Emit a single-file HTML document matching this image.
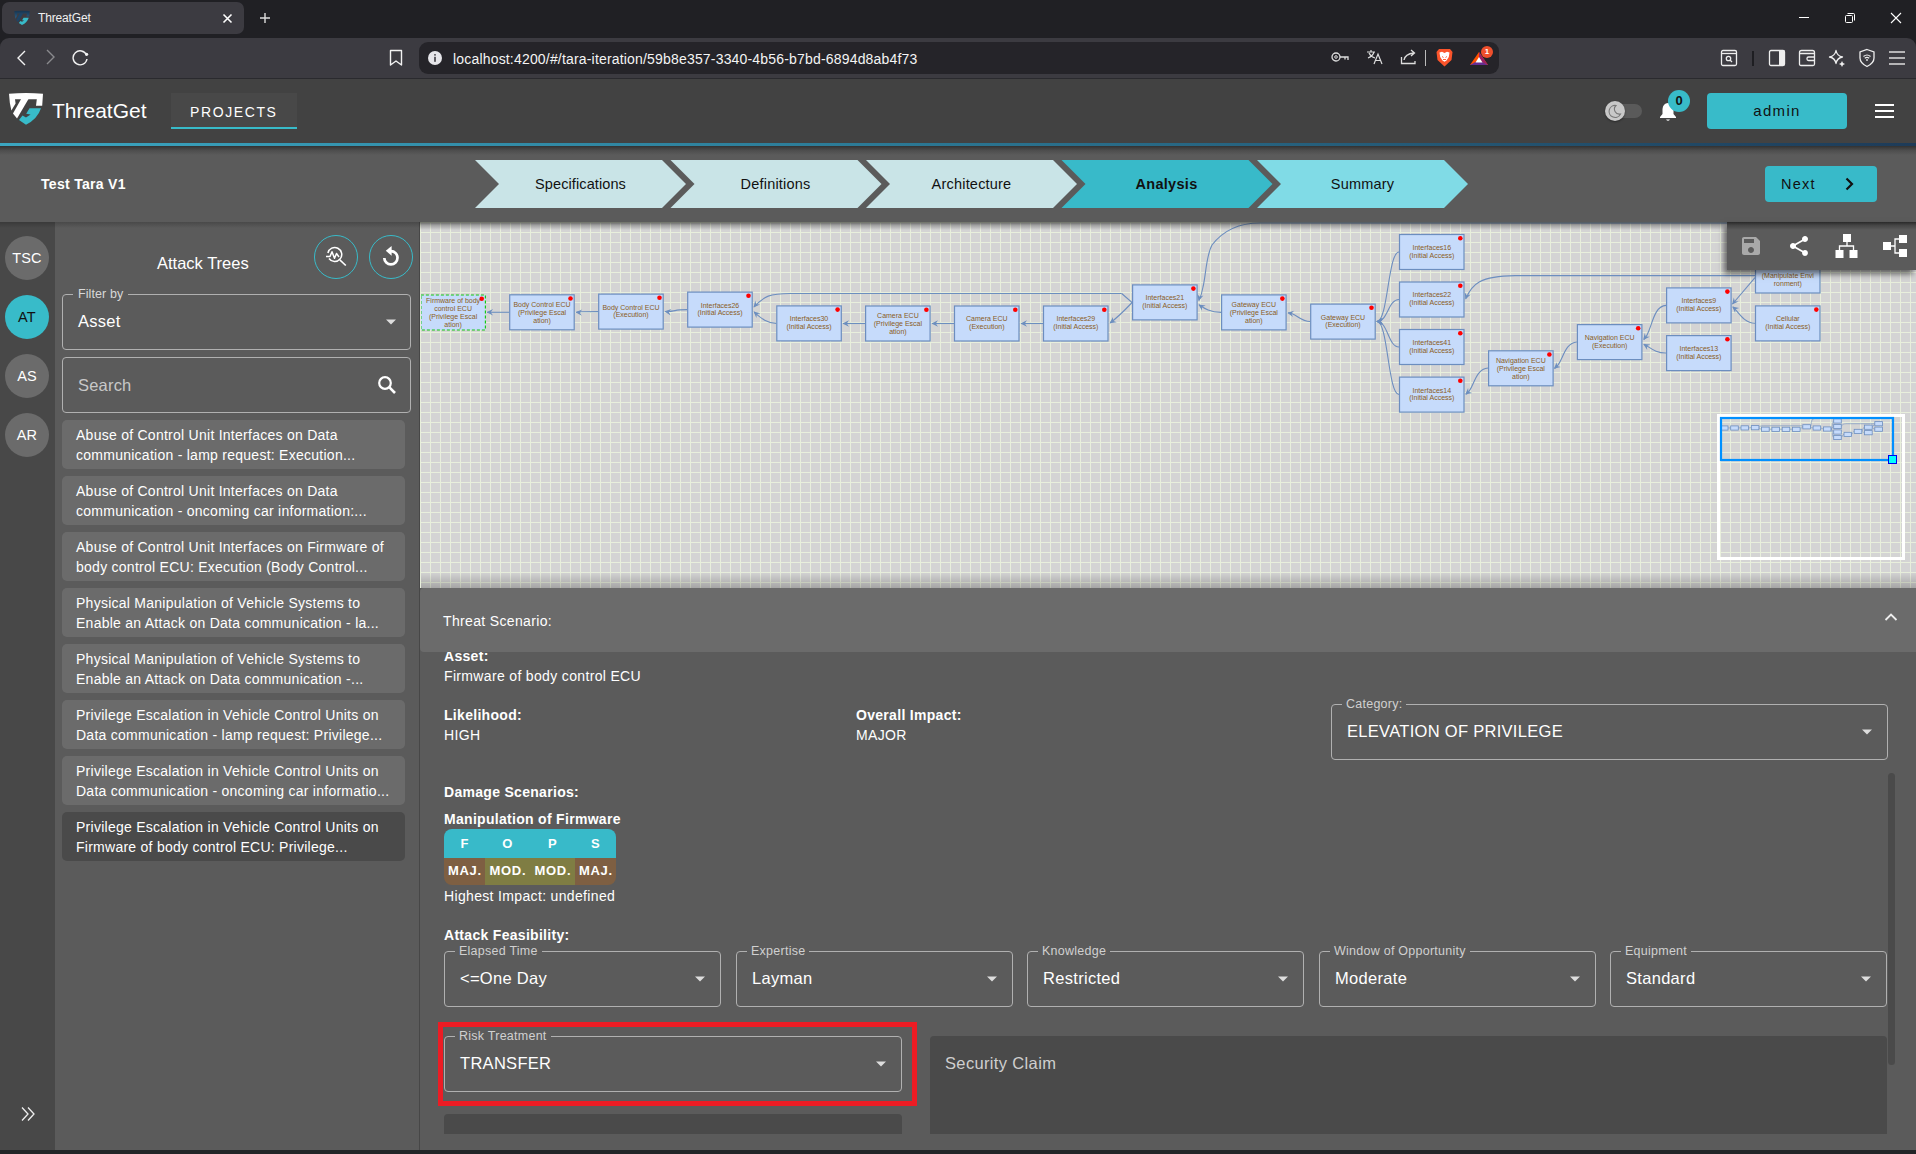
<!DOCTYPE html>
<html><head><meta charset="utf-8">
<style>
*{box-sizing:border-box;margin:0;padding:0}
html,body{width:1916px;height:1154px;overflow:hidden;background:#5b5b5b;font-family:"Liberation Sans",sans-serif;color:#fff}
.a{position:absolute}
/* browser chrome */
#tabstrip{left:0;top:0;width:1916px;height:50px;background:#202024}
#tab{left:2px;top:2px;width:242px;height:32px;background:#3c3b41;border-radius:7px}
#toolbar{left:0;top:38px;width:1916px;height:41px;background:#3c3b41;border-radius:9px 9px 0 0;border-bottom:1px solid #2a2a2e}
#url{left:419px;top:42px;width:1080px;height:32px;background:#252429;border-radius:9px}
/* app header */
#apphdr{left:0;top:79px;width:1916px;height:64px;background:#424242}
#hdrline{left:0;top:143px;width:1916px;height:3px;background:linear-gradient(to right,#3ba6c1 0%,#2c7a96 45%,#1e3b58 100%)}
#subhdr{left:0;top:146px;width:1916px;height:76px;background:#5b5b5b}
#rail{left:0;top:222px;width:55px;height:928px;background:#484848}
#side{left:55px;top:222px;width:365px;height:928px;background:#5b5b5b;border-right:1px solid #474747}
#diagram{left:420px;top:222px;width:1496px;height:366px;background-color:#d4d4d4;
 background-image:linear-gradient(to right,#e8efdc 1px,transparent 1px),linear-gradient(to bottom,#e8efdc 1px,transparent 1px);
 background-size:10px 10px;background-position:0px 10px;overflow:hidden}
#panel{left:420px;top:588px;width:1496px;height:562px;background:#5b5b5b}
#bottomstrip{left:0;top:1150px;width:1916px;height:4px;background:#222527}
.circ{left:5px;width:44px;height:44px;border-radius:22px;background:#6b6b6b;color:#fff;font-size:14.5px;text-align:center;line-height:44px;letter-spacing:0.2px}
.fld{border:1px solid #b0b0b0;border-radius:4px}
.item{left:62px;width:343px;height:49px;border-radius:5px;padding:5px 0 0 14px;font-size:14px;line-height:20px;color:#fff;letter-spacing:0.26px;white-space:nowrap}
.b14{font-size:14px;font-weight:bold;color:#fff;letter-spacing:0.3px;white-space:nowrap}
.r14{font-size:14px;color:#fff;letter-spacing:0.34px;white-space:nowrap}
.fld2{border:1px solid #b0b0b0;border-radius:4px}
.lab{padding:0 4px;background:#5b5b5b;font-size:12.5px;color:#d0d0d0;letter-spacing:0.25px;line-height:15px;white-space:nowrap}
.val{color:#fff;letter-spacing:0.3px;white-space:nowrap}
.fops{text-align:center;font-size:13px;font-weight:bold;color:#fff;letter-spacing:0.2px}
</style></head><body>
<div id="tabstrip" class="a"></div>
<div id="tab" class="a"></div>
<div id="toolbar" class="a"></div>
<div id="url" class="a"></div>

<!-- tab content -->
<svg class="a" style="left:13px;top:9px" width="18" height="18" viewBox="0 0 40 38">
 <defs><linearGradient id="fg" x1="0" y1="0" x2="0" y2="1"><stop offset="0" stop-color="#173550"/><stop offset="1" stop-color="#2b5f86"/></linearGradient></defs>
 <path d="M3 3.7Q20 2.4 37 3.7L36.2 15.7L30 15.7L30.8 9.2L9 9.2L9.6 13.4L5.4 20.4Q3.4 13 3 3.7Z" fill="url(#fg)"/>
 <path d="M15.4 8.5L22.8 8.5L11 28.5L7 23.5Z" fill="#1d4466"/>
 <path d="M23.5 18.3L35 18.3Q31.5 29 20 34.8L13 30L16.5 25.5L20 27.6L24.6 24.4L20.2 23.8Z" fill="#38bbc9"/>
</svg>
<div class="a" style="left:38px;top:11px;font-size:12px;color:#f0f0f0;letter-spacing:-0.15px">ThreatGet</div>
<svg class="a" style="left:222px;top:13px" width="11" height="11" viewBox="0 0 11 11"><path d="M1.5 1.5L9.5 9.5M9.5 1.5L1.5 9.5" stroke="#fff" stroke-width="1.6"/></svg>
<svg class="a" style="left:259px;top:12px" width="12" height="12" viewBox="0 0 12 12"><path d="M6 1V11M1 6H11" stroke="#ddd" stroke-width="1.4"/></svg>
<!-- window controls -->
<svg class="a" style="left:1797px;top:11px" width="14" height="14" viewBox="0 0 14 14"><path d="M2 6.5H12" stroke="#fff" stroke-width="1"/></svg>
<svg class="a" style="left:1843px;top:11px" width="14" height="14" viewBox="0 0 14 14"><rect x="2.5" y="4.5" width="7" height="7" rx="1" fill="none" stroke="#fff" stroke-width="1"/><path d="M4.5 2.5H10.5Q11.5 2.5 11.5 3.5V9.5" fill="none" stroke="#fff" stroke-width="1"/></svg>
<svg class="a" style="left:1889px;top:11px" width="14" height="14" viewBox="0 0 14 14"><path d="M2 2L12 12M12 2L2 12" stroke="#fff" stroke-width="1.1"/></svg>
<!-- nav -->
<svg class="a" style="left:12.5px;top:48.5px" width="18" height="18" viewBox="0 0 18 18"><path d="M12 2L5 9L12 16" fill="none" stroke="#f2f2f2" stroke-width="1.4"/></svg>
<svg class="a" style="left:41px;top:48px" width="18" height="18" viewBox="0 0 18 18"><path d="M6 2L13 9L6 16" fill="none" stroke="#8a8a8e" stroke-width="1.4"/></svg>
<svg class="a" style="left:71px;top:48px" width="20" height="18" viewBox="0 0 20 18"><path d="M15.5 7 A7 7 0 1 0 16 11" fill="none" stroke="#f2f2f2" stroke-width="1.4"/><circle cx="15.6" cy="6.3" r="1.6" fill="#f2f2f2"/></svg>
<svg class="a" style="left:388px;top:49px" width="16" height="18" viewBox="0 0 16 18"><path d="M2.5 1.5H13.5V16L8 12L2.5 16Z" fill="none" stroke="#f2f2f2" stroke-width="1.4" stroke-linejoin="round"/></svg>
<svg class="a" style="left:428px;top:51px" width="14" height="14" viewBox="0 0 14 14"><circle cx="7" cy="7" r="7" fill="#e6e6ea"/><rect x="6.2" y="5.8" width="1.6" height="5" fill="#3c3b41"/><circle cx="7" cy="3.8" r="0.9" fill="#3c3b41"/></svg>
<div class="a" style="left:453px;top:51px;font-size:14px;color:#f4f4f4;letter-spacing:0.18px;white-space:nowrap">localhost:4200/#/tara-iteration/59b8e357-3340-4b56-b7bd-6894d8ab4f73</div>
<!-- url right icons -->
<svg class="a" style="left:1331px;top:50px" width="20" height="14" viewBox="0 0 20 14"><circle cx="5" cy="7" r="4" fill="none" stroke="#ddd" stroke-width="1.3"/><circle cx="5" cy="7" r="1.3" fill="none" stroke="#ddd" stroke-width="1"/><path d="M9 7H17V10M14 7V9.5" fill="none" stroke="#ddd" stroke-width="1.3"/></svg>
<svg class="a" style="left:1366px;top:49px" width="18" height="16" viewBox="0 0 18 16"><path d="M1 3H9M5 1V3M2 9Q7 7 8 3M3 4Q5 8 9 9" fill="none" stroke="#ddd" stroke-width="1.2"/><path d="M8 15L12 5L16 15M9.5 11.5H14.5" fill="none" stroke="#ddd" stroke-width="1.2"/></svg>
<svg class="a" style="left:1400px;top:49px" width="18" height="16" viewBox="0 0 18 16"><path d="M1.5 8V14.5H15V12" fill="none" stroke="#ddd" stroke-width="1.3"/><path d="M4 11Q5 5 14 4M11 1L14.5 4L11 7" fill="none" stroke="#ddd" stroke-width="1.3"/></svg>
<div class="a" style="left:1425px;top:50px;width:1px;height:16px;background:#bbb"></div>
<svg class="a" style="left:1436px;top:48px" width="17" height="19" viewBox="0 0 17 19"><path d="M3 1H14L16.5 4L15.5 12L8.5 18.5L1.5 12L0.5 4Z" fill="#fb542b"/><path d="M3.5 4.5L6 3.8L8.5 5L11 3.8L13.5 4.5L12.8 9L10.5 12.5L8.5 13.8L6.5 12.5L4.2 9Z" fill="#fff"/><path d="M6 8.5L7.5 9.5M11 8.5L9.5 9.5M7 11.5H10" stroke="#fb542b" stroke-width="0.9"/></svg>
<svg class="a" style="left:1469px;top:48px" width="22" height="20" viewBox="0 0 22 20"><path d="M10 4L19 17H1Z" fill="#ff5000"/><path d="M10 4L19 17L10 12Z" fill="#9e1f63"/><path d="M1 17H19L10 12Z" fill="#662d91"/><path d="M10 9L13.5 14.5H6.5Z" fill="#fff"/></svg>
<div class="a" style="left:1481px;top:46px;width:12px;height:12px;border-radius:6px;background:#ef4f2c;color:#fff;font-size:8px;text-align:center;line-height:12px;font-weight:bold">1</div>
<!-- right toolbar icons -->
<svg class="a" style="left:1720px;top:49px" width="18" height="18" viewBox="0 0 18 18"><rect x="1.5" y="1.5" width="15" height="15" rx="1.5" fill="none" stroke="#eee" stroke-width="1.3"/><path d="M1.5 4.5H16.5" stroke="#eee" stroke-width="1.3"/><circle cx="8.5" cy="9.5" r="2.2" fill="none" stroke="#eee" stroke-width="1.3"/><path d="M10 11L12 13" stroke="#eee" stroke-width="1.3"/></svg>
<div class="a" style="left:1752px;top:51px;width:2px;height:15px;background:#1e1e22"></div>
<svg class="a" style="left:1768px;top:49px" width="18" height="18" viewBox="0 0 18 18"><rect x="1.5" y="1.5" width="15" height="15" rx="1.5" fill="none" stroke="#eee" stroke-width="1.3"/><rect x="11" y="1.5" width="5.5" height="15" fill="#eee"/></svg>
<svg class="a" style="left:1798px;top:49px" width="18" height="18" viewBox="0 0 18 18"><path d="M1.5 3.5Q1.5 1.5 3.5 1.5H14.5Q16.5 1.5 16.5 3.5V15Q16.5 16.5 15 16.5H3Q1.5 16.5 1.5 15Z" fill="none" stroke="#eee" stroke-width="1.3"/><path d="M1.5 4.5H16.5M16.5 8H10.5Q9 8 9 9.5V10Q9 11.5 10.5 11.5H16.5" fill="none" stroke="#eee" stroke-width="1.3"/></svg>
<svg class="a" style="left:1828px;top:49px" width="18" height="18" viewBox="0 0 18 18"><path d="M8 1.5Q9 7 14.5 8Q9 9 8 14.5Q7 9 1.5 8Q7 7 8 1.5Z" fill="none" stroke="#eee" stroke-width="1.3" stroke-linejoin="round"/><path d="M14 12L15 14L17 15L15 16L14 18L13 16L11 15L13 14Z" fill="#eee"/></svg>
<svg class="a" style="left:1858px;top:48px" width="18" height="20" viewBox="0 0 18 20"><path d="M9 1.5L16 4V10Q16 15 9 18.5Q2 15 2 10V4Z" fill="none" stroke="#eee" stroke-width="1.3"/><path d="M5.5 8.5Q9 5.5 12.5 8.5M6.8 10.3Q9 8.5 11.2 10.3" fill="none" stroke="#eee" stroke-width="1.2"/><circle cx="9" cy="12" r="0.9" fill="#eee"/></svg>
<svg class="a" style="left:1888px;top:49px" width="18" height="18" viewBox="0 0 18 18"><path d="M1 3H17M1 9H17M1 15H17" stroke="#ddd" stroke-width="1.5"/></svg>
<div id="apphdr" class="a"></div>
<div id="hdrline" class="a"></div>
<div id="subhdr" class="a"></div>
<div id="rail" class="a"></div>
<div id="side" class="a"></div>
<div id="diagram" class="a"></div>
<!--DIAGRAM-->
<svg class="a" style="left:421px;top:222px;z-index:1" width="1495" height="366" viewBox="421 222 1495 366">
<g fill="none" stroke="#6c8ebf" stroke-width="1.1">
<path d="M509.2 312.3 L487 312.3"/>
<path d="M598.2 311.6 C560 311.8 590 312 576 312.3"/>
<path d="M687.2 309.6 C670 309.8 680 311.3 665 311.5"/>
<path d="M1121.7 293.5 L790 293.5 C770 293.5 764 296 754 307"/>
<path d="M776.3 323.4 C766 323 761 318 754 312"/>
<path d="M865.1 323.5 L843 323.5"/>
<path d="M954 323.5 L932 323.5"/>
<path d="M1043 323.5 L1021 323.5"/>
<path d="M1121.7 293.5 L1132.1 302.5 C1125 310 1117 318 1110 323"/>
<path d="M1221.1 312.4 C1210 312.2 1205 309 1199 304.8"/>
<path d="M1260 223 C1236 223 1222 232 1212 245 C1206 256 1206 275 1203 287 C1202 293 1200.5 297 1199 300.5"/>
<path d="M1310.2 321.5 C1300 321.5 1296 313 1288 312.7"/>
<path d="M1399 252 C1388 252 1388 321.5 1377 321.5"/>
<path d="M1399 299.5 C1388 299.5 1388 321.5 1377 321.5"/>
<path d="M1399 347 C1388 347 1388 321.5 1377 321.5"/>
<path d="M1399 394.5 C1388 394.5 1388 321.5 1377 321.5"/>
<path d="M1755 275.6 L1515 275.6 C1480 276 1472 284 1466 298.5"/>
<path d="M1755 277.6 L1732.5 304"/>
<path d="M1755 323.2 C1744 323 1739 313 1733 306.8"/>
<path d="M1666.1 305.4 C1652 306 1652 332 1644 339.5"/>
<path d="M1666.1 353 C1655 353 1651 348 1644 344.2"/>
<path d="M1576.9 342 C1563 343 1563 364 1554.5 368.5"/>
<path d="M1488.1 368 C1474 369 1474 390 1466 394.3"/>
<path d="M1760 223 L1260 223"/>
</g><g fill="#6c8ebf">
<path d="M486.5 312.3L493.0 309.1L490.8 312.3L493.0 315.5Z"/>
<path d="M575.5 312.3L582.2 309.4L579.8 312.5L581.8 315.8Z"/>
<path d="M664.5 311.6L671.3 309.0L668.8 312.0L670.7 315.4Z"/>
<path d="M753.5 307.5L755.2 300.5L756.3 304.2L760.1 304.6Z"/>
<path d="M753.5 311.5L760.5 313.2L756.8 314.3L756.4 318.1Z"/>
<path d="M842.5 323.5L849.0 320.3L846.8 323.5L849.0 326.7Z"/>
<path d="M931.5 323.5L938.0 320.3L935.8 323.5L938.0 326.7Z"/>
<path d="M1020.5 323.5L1027.0 320.3L1024.8 323.5L1027.0 326.7Z"/>
<path d="M1109.5 323.3L1113.0 317.0L1113.0 320.8L1116.7 322.2Z"/>
<path d="M1198.5 304.5L1205.7 305.6L1202.0 307.0L1202.0 310.8Z"/>
<path d="M1198.6 301.0L1197.2 293.9L1199.7 296.8L1203.4 295.5Z"/>
<path d="M1287.2 312.7L1294.2 310.7L1291.4 313.4L1293.0 317.0Z"/>
<path d="M1376.2 321.5L1382.2 317.4L1380.5 320.9L1383.1 323.8Z"/>
<path d="M1376.2 321.5L1382.5 318.0L1380.5 321.3L1382.9 324.4Z"/>
<path d="M1376.2 321.5L1382.9 318.6L1380.5 321.7L1382.5 325.0Z"/>
<path d="M1376.2 321.5L1383.1 319.2L1380.5 322.1L1382.2 325.6Z"/>
<path d="M1465.3 299.4L1464.8 292.2L1466.9 295.4L1470.7 294.6Z"/>
<path d="M1732.0 304.4L1733.8 297.4L1734.8 301.2L1738.7 301.6Z"/>
<path d="M1732.2 306.4L1739.2 308.1L1735.5 309.2L1735.1 313.0Z"/>
<path d="M1643.2 340.0L1644.7 332.9L1645.8 336.6L1649.7 336.8Z"/>
<path d="M1643.2 344.0L1650.4 344.5L1646.9 346.1L1647.2 350.0Z"/>
<path d="M1553.8 368.8L1556.7 362.2L1557.1 366.0L1560.8 367.1Z"/>
<path d="M1465.2 394.6L1468.1 388.0L1468.5 391.8L1472.2 392.9Z"/>
</g>
<rect x="420.9" y="295.0" width="64.5" height="35" fill="#c6dbfb" stroke="#12c812" stroke-width="1.15" stroke-dasharray="3 2"/>
<circle cx="481.7" cy="298.7" r="2.3" fill="#f00"/>
<text x="453.1" y="303.0" text-anchor="middle" font-size="7" fill="#8a5c24">Firmware of body</text>
<text x="453.1" y="310.9" text-anchor="middle" font-size="7" fill="#8a5c24">control ECU</text>
<text x="453.1" y="318.8" text-anchor="middle" font-size="7" fill="#8a5c24">(Privilege Escal</text>
<text x="453.1" y="326.8" text-anchor="middle" font-size="7" fill="#8a5c24">ation)</text>
<rect x="509.7" y="294.8" width="64.5" height="35" fill="#c6dbfb" stroke="#6c8ebf" stroke-width="1.2"/>
<circle cx="570.5" cy="298.5" r="2.3" fill="#f00"/>
<text x="542.0" y="306.8" text-anchor="middle" font-size="7" fill="#8a5c24">Body Control ECU</text>
<text x="542.0" y="314.7" text-anchor="middle" font-size="7" fill="#8a5c24">(Privilege Escal</text>
<text x="542.0" y="322.6" text-anchor="middle" font-size="7" fill="#8a5c24">ation)</text>
<rect x="598.7" y="294.1" width="64.5" height="35" fill="#c6dbfb" stroke="#6c8ebf" stroke-width="1.2"/>
<circle cx="659.5" cy="297.8" r="2.3" fill="#f00"/>
<text x="631.0" y="309.5" text-anchor="middle" font-size="7" fill="#8a5c24">Body Control ECU</text>
<text x="631.0" y="317.4" text-anchor="middle" font-size="7" fill="#8a5c24">(Execution)</text>
<rect x="687.7" y="292.1" width="64.5" height="35" fill="#c6dbfb" stroke="#6c8ebf" stroke-width="1.2"/>
<circle cx="748.5" cy="295.8" r="2.3" fill="#f00"/>
<text x="720.0" y="307.5" text-anchor="middle" font-size="7" fill="#8a5c24">Interfaces26</text>
<text x="720.0" y="315.4" text-anchor="middle" font-size="7" fill="#8a5c24">(Initial Access)</text>
<rect x="776.8" y="305.9" width="64.5" height="35" fill="#c6dbfb" stroke="#6c8ebf" stroke-width="1.2"/>
<circle cx="837.6" cy="309.6" r="2.3" fill="#f00"/>
<text x="809.0" y="321.2" text-anchor="middle" font-size="7" fill="#8a5c24">Interfaces30</text>
<text x="809.0" y="329.1" text-anchor="middle" font-size="7" fill="#8a5c24">(Initial Access)</text>
<rect x="865.6" y="306.0" width="64.5" height="35" fill="#c6dbfb" stroke="#6c8ebf" stroke-width="1.2"/>
<circle cx="926.4" cy="309.7" r="2.3" fill="#f00"/>
<text x="897.9" y="318.0" text-anchor="middle" font-size="7" fill="#8a5c24">Camera ECU</text>
<text x="897.9" y="325.9" text-anchor="middle" font-size="7" fill="#8a5c24">(Privilege Escal</text>
<text x="897.9" y="333.8" text-anchor="middle" font-size="7" fill="#8a5c24">ation)</text>
<rect x="954.5" y="306.0" width="64.5" height="35" fill="#c6dbfb" stroke="#6c8ebf" stroke-width="1.2"/>
<circle cx="1015.3" cy="309.7" r="2.3" fill="#f00"/>
<text x="986.8" y="321.4" text-anchor="middle" font-size="7" fill="#8a5c24">Camera ECU</text>
<text x="986.8" y="329.2" text-anchor="middle" font-size="7" fill="#8a5c24">(Execution)</text>
<rect x="1043.5" y="306.0" width="64.5" height="35" fill="#c6dbfb" stroke="#6c8ebf" stroke-width="1.2"/>
<circle cx="1104.3" cy="309.7" r="2.3" fill="#f00"/>
<text x="1075.8" y="321.4" text-anchor="middle" font-size="7" fill="#8a5c24">Interfaces29</text>
<text x="1075.8" y="329.2" text-anchor="middle" font-size="7" fill="#8a5c24">(Initial Access)</text>
<rect x="1132.6" y="284.9" width="64.5" height="35" fill="#c6dbfb" stroke="#6c8ebf" stroke-width="1.2"/>
<circle cx="1193.4" cy="288.6" r="2.3" fill="#f00"/>
<text x="1164.8" y="300.2" text-anchor="middle" font-size="7" fill="#8a5c24">Interfaces21</text>
<text x="1164.8" y="308.1" text-anchor="middle" font-size="7" fill="#8a5c24">(Initial Access)</text>
<rect x="1221.6" y="294.9" width="64.5" height="35" fill="#c6dbfb" stroke="#6c8ebf" stroke-width="1.2"/>
<circle cx="1282.4" cy="298.6" r="2.3" fill="#f00"/>
<text x="1253.8" y="306.9" text-anchor="middle" font-size="7" fill="#8a5c24">Gateway ECU</text>
<text x="1253.8" y="314.8" text-anchor="middle" font-size="7" fill="#8a5c24">(Privilege Escal</text>
<text x="1253.8" y="322.7" text-anchor="middle" font-size="7" fill="#8a5c24">ation)</text>
<rect x="1310.7" y="304.1" width="64.5" height="35" fill="#c6dbfb" stroke="#6c8ebf" stroke-width="1.2"/>
<circle cx="1371.5" cy="307.8" r="2.3" fill="#f00"/>
<text x="1343.0" y="319.5" text-anchor="middle" font-size="7" fill="#8a5c24">Gateway ECU</text>
<text x="1343.0" y="327.4" text-anchor="middle" font-size="7" fill="#8a5c24">(Execution)</text>
<rect x="1399.5" y="234.5" width="64.5" height="35" fill="#c6dbfb" stroke="#6c8ebf" stroke-width="1.2"/>
<circle cx="1460.3" cy="238.2" r="2.3" fill="#f00"/>
<text x="1431.8" y="249.9" text-anchor="middle" font-size="7" fill="#8a5c24">Interfaces16</text>
<text x="1431.8" y="257.8" text-anchor="middle" font-size="7" fill="#8a5c24">(Initial Access)</text>
<rect x="1399.5" y="282.0" width="64.5" height="35" fill="#c6dbfb" stroke="#6c8ebf" stroke-width="1.2"/>
<circle cx="1460.3" cy="285.7" r="2.3" fill="#f00"/>
<text x="1431.8" y="297.4" text-anchor="middle" font-size="7" fill="#8a5c24">Interfaces22</text>
<text x="1431.8" y="305.2" text-anchor="middle" font-size="7" fill="#8a5c24">(Initial Access)</text>
<rect x="1399.5" y="329.5" width="64.5" height="35" fill="#c6dbfb" stroke="#6c8ebf" stroke-width="1.2"/>
<circle cx="1460.3" cy="333.2" r="2.3" fill="#f00"/>
<text x="1431.8" y="344.9" text-anchor="middle" font-size="7" fill="#8a5c24">Interfaces41</text>
<text x="1431.8" y="352.8" text-anchor="middle" font-size="7" fill="#8a5c24">(Initial Access)</text>
<rect x="1399.5" y="377.1" width="64.5" height="35" fill="#c6dbfb" stroke="#6c8ebf" stroke-width="1.2"/>
<circle cx="1460.3" cy="380.8" r="2.3" fill="#f00"/>
<text x="1431.8" y="392.5" text-anchor="middle" font-size="7" fill="#8a5c24">Interfaces14</text>
<text x="1431.8" y="400.4" text-anchor="middle" font-size="7" fill="#8a5c24">(Initial Access)</text>
<rect x="1488.6" y="350.8" width="64.5" height="35" fill="#c6dbfb" stroke="#6c8ebf" stroke-width="1.2"/>
<circle cx="1549.4" cy="354.5" r="2.3" fill="#f00"/>
<text x="1520.8" y="362.8" text-anchor="middle" font-size="7" fill="#8a5c24">Navigation ECU</text>
<text x="1520.8" y="370.7" text-anchor="middle" font-size="7" fill="#8a5c24">(Privilege Escal</text>
<text x="1520.8" y="378.6" text-anchor="middle" font-size="7" fill="#8a5c24">ation)</text>
<rect x="1577.4" y="324.6" width="64.5" height="35" fill="#c6dbfb" stroke="#6c8ebf" stroke-width="1.2"/>
<circle cx="1638.2" cy="328.3" r="2.3" fill="#f00"/>
<text x="1609.7" y="340.0" text-anchor="middle" font-size="7" fill="#8a5c24">Navigation ECU</text>
<text x="1609.7" y="347.9" text-anchor="middle" font-size="7" fill="#8a5c24">(Execution)</text>
<rect x="1666.6" y="287.9" width="64.5" height="35" fill="#c6dbfb" stroke="#6c8ebf" stroke-width="1.2"/>
<circle cx="1727.4" cy="291.6" r="2.3" fill="#f00"/>
<text x="1698.8" y="303.2" text-anchor="middle" font-size="7" fill="#8a5c24">Interfaces9</text>
<text x="1698.8" y="311.1" text-anchor="middle" font-size="7" fill="#8a5c24">(Initial Access)</text>
<rect x="1666.6" y="335.6" width="64.5" height="35" fill="#c6dbfb" stroke="#6c8ebf" stroke-width="1.2"/>
<circle cx="1727.4" cy="339.3" r="2.3" fill="#f00"/>
<text x="1698.8" y="351.0" text-anchor="middle" font-size="7" fill="#8a5c24">Interfaces13</text>
<text x="1698.8" y="358.9" text-anchor="middle" font-size="7" fill="#8a5c24">(Initial Access)</text>
<rect x="1755.5" y="258.0" width="64.5" height="35" fill="#c6dbfb" stroke="#6c8ebf" stroke-width="1.2"/>
<circle cx="1816.3" cy="261.7" r="2.3" fill="#f00"/>
<text x="1787.8" y="270.0" text-anchor="middle" font-size="7" fill="#8a5c24">Environment</text>
<text x="1787.8" y="277.9" text-anchor="middle" font-size="7" fill="#8a5c24">(Manipulate Envi</text>
<text x="1787.8" y="285.8" text-anchor="middle" font-size="7" fill="#8a5c24">ronment)</text>
<rect x="1755.5" y="305.9" width="64.5" height="35" fill="#c6dbfb" stroke="#6c8ebf" stroke-width="1.2"/>
<circle cx="1816.3" cy="309.6" r="2.3" fill="#f00"/>
<text x="1787.8" y="321.2" text-anchor="middle" font-size="7" fill="#8a5c24">Cellular</text>
<text x="1787.8" y="329.1" text-anchor="middle" font-size="7" fill="#8a5c24">(Initial Access)</text>
<g transform="translate(1720.5,417.5) scale(0.1157) translate(-421,-222)" fill="none" stroke="#6c8ebf" stroke-width="0.7" opacity="0.8"><path d="M509.2 312.3 L487 312.3" vector-effect="non-scaling-stroke"/><path d="M598.2 311.6 C560 311.8 590 312 576 312.3" vector-effect="non-scaling-stroke"/><path d="M687.2 309.6 C670 309.8 680 311.3 665 311.5" vector-effect="non-scaling-stroke"/><path d="M1121.7 293.5 L790 293.5 C770 293.5 764 296 754 307" vector-effect="non-scaling-stroke"/><path d="M776.3 323.4 C766 323 761 318 754 312" vector-effect="non-scaling-stroke"/><path d="M865.1 323.5 L843 323.5" vector-effect="non-scaling-stroke"/><path d="M954 323.5 L932 323.5" vector-effect="non-scaling-stroke"/><path d="M1043 323.5 L1021 323.5" vector-effect="non-scaling-stroke"/><path d="M1121.7 293.5 L1132.1 302.5 C1125 310 1117 318 1110 323" vector-effect="non-scaling-stroke"/><path d="M1221.1 312.4 C1210 312.2 1205 309 1199 304.8" vector-effect="non-scaling-stroke"/><path d="M1260 223 C1236 223 1222 232 1212 245 C1206 256 1206 275 1203 287 C1202 293 1200.5 297 1199 300.5" vector-effect="non-scaling-stroke"/><path d="M1310.2 321.5 C1300 321.5 1296 313 1288 312.7" vector-effect="non-scaling-stroke"/><path d="M1399 252 C1388 252 1388 321.5 1377 321.5" vector-effect="non-scaling-stroke"/><path d="M1399 299.5 C1388 299.5 1388 321.5 1377 321.5" vector-effect="non-scaling-stroke"/><path d="M1399 347 C1388 347 1388 321.5 1377 321.5" vector-effect="non-scaling-stroke"/><path d="M1399 394.5 C1388 394.5 1388 321.5 1377 321.5" vector-effect="non-scaling-stroke"/><path d="M1755 275.6 L1515 275.6 C1480 276 1472 284 1466 298.5" vector-effect="non-scaling-stroke"/><path d="M1755 277.6 L1732.5 304" vector-effect="non-scaling-stroke"/><path d="M1755 323.2 C1744 323 1739 313 1733 306.8" vector-effect="non-scaling-stroke"/><path d="M1666.1 305.4 C1652 306 1652 332 1644 339.5" vector-effect="non-scaling-stroke"/><path d="M1666.1 353 C1655 353 1651 348 1644 344.2" vector-effect="non-scaling-stroke"/><path d="M1576.9 342 C1563 343 1563 364 1554.5 368.5" vector-effect="non-scaling-stroke"/><path d="M1488.1 368 C1474 369 1474 390 1466 394.3" vector-effect="non-scaling-stroke"/><path d="M1760 223 L1260 223" vector-effect="non-scaling-stroke"/></g>
<g><rect x="1720.4" y="425.9" width="7.6" height="4.2" fill="#c6dbfb" stroke="#6c8ebf" stroke-width="0.8"/><rect x="1730.7" y="425.9" width="7.6" height="4.2" fill="#c6dbfb" stroke="#6c8ebf" stroke-width="0.8"/><rect x="1741.0" y="425.8" width="7.6" height="4.2" fill="#c6dbfb" stroke="#6c8ebf" stroke-width="0.8"/><rect x="1751.3" y="425.6" width="7.6" height="4.2" fill="#c6dbfb" stroke="#6c8ebf" stroke-width="0.8"/><rect x="1761.6" y="427.1" width="7.6" height="4.2" fill="#c6dbfb" stroke="#6c8ebf" stroke-width="0.8"/><rect x="1771.9" y="427.2" width="7.6" height="4.2" fill="#c6dbfb" stroke="#6c8ebf" stroke-width="0.8"/><rect x="1782.2" y="427.2" width="7.6" height="4.2" fill="#c6dbfb" stroke="#6c8ebf" stroke-width="0.8"/><rect x="1792.5" y="427.2" width="7.6" height="4.2" fill="#c6dbfb" stroke="#6c8ebf" stroke-width="0.8"/><rect x="1802.8" y="424.7" width="7.6" height="4.2" fill="#c6dbfb" stroke="#6c8ebf" stroke-width="0.8"/><rect x="1813.1" y="425.9" width="7.6" height="4.2" fill="#c6dbfb" stroke="#6c8ebf" stroke-width="0.8"/><rect x="1823.4" y="426.9" width="7.6" height="4.2" fill="#c6dbfb" stroke="#6c8ebf" stroke-width="0.8"/><rect x="1833.7" y="418.9" width="7.6" height="4.2" fill="#c6dbfb" stroke="#6c8ebf" stroke-width="0.8"/><rect x="1833.7" y="424.4" width="7.6" height="4.2" fill="#c6dbfb" stroke="#6c8ebf" stroke-width="0.8"/><rect x="1833.7" y="429.9" width="7.6" height="4.2" fill="#c6dbfb" stroke="#6c8ebf" stroke-width="0.8"/><rect x="1833.7" y="435.4" width="7.6" height="4.2" fill="#c6dbfb" stroke="#6c8ebf" stroke-width="0.8"/><rect x="1844.0" y="432.3" width="7.6" height="4.2" fill="#c6dbfb" stroke="#6c8ebf" stroke-width="0.8"/><rect x="1854.2" y="429.3" width="7.6" height="4.2" fill="#c6dbfb" stroke="#6c8ebf" stroke-width="0.8"/><rect x="1864.6" y="425.1" width="7.6" height="4.2" fill="#c6dbfb" stroke="#6c8ebf" stroke-width="0.8"/><rect x="1864.6" y="430.6" width="7.6" height="4.2" fill="#c6dbfb" stroke="#6c8ebf" stroke-width="0.8"/><rect x="1874.8" y="421.6" width="7.6" height="4.2" fill="#c6dbfb" stroke="#6c8ebf" stroke-width="0.8"/><rect x="1874.8" y="427.1" width="7.6" height="4.2" fill="#c6dbfb" stroke="#6c8ebf" stroke-width="0.8"/></g>
<rect x="1718.5" y="415.5" width="185" height="143" fill="none" stroke="#fff" stroke-width="3"/>
<rect x="1721" y="418" width="172" height="42" fill="none" stroke="#0090ff" stroke-width="2.2"/>
<rect x="1888.5" y="455.5" width="8" height="8" fill="#00ffff" stroke="#0000ee" stroke-width="1"/>
</svg>
<!--/DIAGRAM-->
<!--TOOLBAR-->
<div class="a" style="left:1727px;top:222px;width:189px;height:48px;background:#5b5b5b;box-shadow:-3px 4px 6px rgba(0,0,0,.55);z-index:3"></div>
<svg class="a" style="left:1739px;top:234px;z-index:4" width="24" height="24" viewBox="0 0 24 24"><path d="M17 3H5c-1.11 0-2 .9-2 2v14c0 1.1.89 2 2 2h14c1.1 0 2-.9 2-2V7l-4-4zm-5 16c-1.66 0-3-1.34-3-3s1.34-3 3-3 3 1.34 3 3-1.34 3-3 3zm3-10H5V5h10v4z" fill="#a9a9a9"/></svg>
<svg class="a" style="left:1787px;top:234px;z-index:4" width="24" height="24" viewBox="0 0 24 24"><path d="M18 16.08c-.76 0-1.44.3-1.96.77L8.91 12.7c.05-.23.09-.46.09-.7s-.04-.47-.09-.7l7.05-4.11c.54.5 1.25.81 2.04.81 1.66 0 3-1.34 3-3s-1.34-3-3-3-3 1.34-3 3c0 .24.04.47.09.7L8.04 9.81C7.5 9.31 6.79 9 6 9c-1.66 0-3 1.34-3 3s1.34 3 3 3c.79 0 1.5-.31 2.04-.81l7.12 4.16c-.05.21-.08.43-.08.65 0 1.61 1.31 2.92 2.92 2.92 1.61 0 2.92-1.31 2.92-2.92s-1.31-2.92-2.92-2.92z" fill="#fff"/></svg>
<svg class="a" style="left:1835px;top:233px;z-index:4" width="24" height="26" viewBox="0 0 24 26"><rect x="8" y="1" width="8" height="8" fill="#fff"/><rect x="0.5" y="17" width="8" height="8" fill="#fff"/><rect x="14.5" y="17" width="8" height="8" fill="#fff"/><path d="M12 9V13M4.5 17V13H18.5V17" fill="none" stroke="#fff" stroke-width="1.3"/></svg>
<svg class="a" style="left:1882px;top:234px;z-index:4" width="26" height="24" viewBox="0 0 26 24"><rect x="1" y="8" width="8" height="8" fill="#fff"/><rect x="17" y="1" width="8" height="8" fill="#fff"/><rect x="17" y="15" width="8" height="8" fill="#fff"/><path d="M9 12H13M17 5H13V19H17" fill="none" stroke="#fff" stroke-width="1.3"/></svg>
<div class="a" style="left:421px;top:572px;width:1495px;height:16px;background:linear-gradient(to bottom,rgba(0,0,0,0),rgba(0,0,0,.22));z-index:2"></div>
<!--/TOOLBAR-->
<div id="panel" class="a"></div>
<!--PANEL-->
<div class="a" style="left:420px;top:588px;width:1496px;height:64px;background:#6b6b6b;border-radius:4px 0 0 4px;z-index:2"></div>
<div class="a" style="left:443px;top:613px;font-size:14px;color:#fff;letter-spacing:0.35px;z-index:2">Threat Scenario:</div>
<svg class="a" style="left:1883px;top:611px;z-index:2" width="16" height="12" viewBox="0 0 16 12"><path d="M2.5 9L8 3.5L13.5 9" fill="none" stroke="#eee" stroke-width="1.8"/></svg>
<div class="a b14" style="left:444px;top:648px">Asset:</div>
<div class="a r14" style="left:444px;top:668px">Firmware of body control ECU</div>
<div class="a b14" style="left:444px;top:707px">Likelihood:</div>
<div class="a r14" style="left:444px;top:727px">HIGH</div>
<div class="a b14" style="left:856px;top:707px">Overall Impact:</div>
<div class="a r14" style="left:856px;top:727px">MAJOR</div>
<div class="a fld2" style="left:1331px;top:704px;width:557px;height:56px"></div>
<div class="a lab" style="left:1342px;top:697px">Category:</div>
<div class="a val" style="left:1347px;top:722px;font-size:16.5px">ELEVATION OF PRIVILEGE</div>
<svg class="a" style="left:1861px;top:728px" width="12" height="8" viewBox="0 0 12 8"><path d="M1 1.5H11L6 6.5Z" fill="#ddd"/></svg>
<div class="a" style="left:1888px;top:773px;width:7px;height:292px;border-radius:4px;background:#4a4a4a"></div>
<div class="a b14" style="left:444px;top:784px">Damage Scenarios:</div>
<div class="a b14" style="left:444px;top:811px">Manipulation of Firmware</div>
<div class="a" style="left:444px;top:829px;width:172px;height:56px;border-radius:8px;overflow:hidden">
 <div class="a" style="left:0;top:0;width:172px;height:29px;background:#38bac9"></div>
 <div class="a" style="left:0;top:29px;width:41px;height:27px;background:#7e5f42"></div>
 <div class="a" style="left:41px;top:29px;width:90px;height:27px;background:#7f7d43"></div>
 <div class="a" style="left:131px;top:29px;width:41px;height:27px;background:#7e5f42"></div>
 <div class="a fops" style="left:0;top:7px;width:41px">F</div>
 <div class="a fops" style="left:41px;top:7px;width:45px">O</div>
 <div class="a fops" style="left:86px;top:7px;width:45px">P</div>
 <div class="a fops" style="left:131px;top:7px;width:41px">S</div>
 <div class="a fops" style="left:0;top:34px;width:41px;letter-spacing:0.7px;text-indent:0.7px">MAJ.</div>
 <div class="a fops" style="left:41px;top:34px;width:45px;letter-spacing:0.7px;text-indent:0.7px">MOD.</div>
 <div class="a fops" style="left:86px;top:34px;width:45px;letter-spacing:0.7px;text-indent:0.7px">MOD.</div>
 <div class="a fops" style="left:131px;top:34px;width:41px;letter-spacing:0.7px;text-indent:0.7px">MAJ.</div>
</div>
<div class="a r14" style="left:444px;top:888px">Highest Impact: undefined</div>
<div class="a b14" style="left:444px;top:927px">Attack Feasibility:</div>
<div class="a fld2" style="left:444px;top:951px;width:277px;height:56px"></div>
<div class="a lab" style="left:455px;top:944px">Elapsed Time</div>
<div class="a val" style="left:460px;top:969px;font-size:16.5px">&lt;=One Day</div>
<svg class="a" style="left:694px;top:975px" width="12" height="8" viewBox="0 0 12 8"><path d="M1 1.5H11L6 6.5Z" fill="#ddd"/></svg>
<div class="a fld2" style="left:736px;top:951px;width:277px;height:56px"></div>
<div class="a lab" style="left:747px;top:944px">Expertise</div>
<div class="a val" style="left:752px;top:969px;font-size:16.5px">Layman</div>
<svg class="a" style="left:986px;top:975px" width="12" height="8" viewBox="0 0 12 8"><path d="M1 1.5H11L6 6.5Z" fill="#ddd"/></svg>
<div class="a fld2" style="left:1027px;top:951px;width:277px;height:56px"></div>
<div class="a lab" style="left:1038px;top:944px">Knowledge</div>
<div class="a val" style="left:1043px;top:969px;font-size:16.5px">Restricted</div>
<svg class="a" style="left:1277px;top:975px" width="12" height="8" viewBox="0 0 12 8"><path d="M1 1.5H11L6 6.5Z" fill="#ddd"/></svg>
<div class="a fld2" style="left:1319px;top:951px;width:277px;height:56px"></div>
<div class="a lab" style="left:1330px;top:944px">Window of Opportunity</div>
<div class="a val" style="left:1335px;top:969px;font-size:16.5px">Moderate</div>
<svg class="a" style="left:1569px;top:975px" width="12" height="8" viewBox="0 0 12 8"><path d="M1 1.5H11L6 6.5Z" fill="#ddd"/></svg>
<div class="a fld2" style="left:1610px;top:951px;width:277px;height:56px"></div>
<div class="a lab" style="left:1621px;top:944px">Equipment</div>
<div class="a val" style="left:1626px;top:969px;font-size:16.5px">Standard</div>
<svg class="a" style="left:1860px;top:975px" width="12" height="8" viewBox="0 0 12 8"><path d="M1 1.5H11L6 6.5Z" fill="#ddd"/></svg>
<div class="a" style="left:438px;top:1022px;width:479px;height:84px;border:5px solid #ec1c24"></div>
<div class="a fld2" style="left:444px;top:1036px;width:458px;height:56px"></div>
<div class="a lab" style="left:455px;top:1029px">Risk Treatment</div>
<div class="a val" style="left:460px;top:1054px;font-size:16.5px">TRANSFER</div>
<svg class="a" style="left:875px;top:1060px" width="12" height="8" viewBox="0 0 12 8"><path d="M1 1.5H11L6 6.5Z" fill="#ddd"/></svg>
<div class="a" style="left:444px;top:1114px;width:458px;height:20px;background:#4a4a4a;border-radius:4px 4px 0 0"></div>
<div class="a" style="left:930px;top:1036px;width:957px;height:98px;background:#4a4a4a;border-radius:4px 4px 0 0"></div>
<div class="a" style="left:945px;top:1054px;font-size:16.5px;color:#cfcfcf;letter-spacing:0.35px">Security Claim</div>
<!--/PANEL-->


<!-- app header content -->
<svg class="a" style="left:6px;top:90px" width="40" height="38" viewBox="0 0 40 38">
 <path d="M3 3.7Q20 2.4 37 3.7L36.2 15.7L30 15.7L30.8 9.2L9 9.2L9.6 13.4L5.4 20.4Q3.4 13 3 3.7Z" fill="#fff"/>
 <path d="M15.4 8.5L22.8 8.5L11 28.5L7 23.5Z" fill="#fff"/>
 <path d="M23.5 18.3L35 18.3Q31.5 29 20 34.8L13 30L16.5 25.5L20 27.6L24.6 24.4L20.2 23.8Z" fill="#38bbc9"/>
</svg>
<div class="a" style="left:52px;top:99px;font-size:21px;color:#fff;letter-spacing:0px">ThreatGet</div>
<div class="a" style="left:171px;top:93px;width:126px;height:35px;background:#484848"></div>
<div class="a" style="left:171px;top:127px;width:126px;height:2px;background:#38bbc9"></div>
<div class="a" style="left:190px;top:104px;font-size:14px;color:#fff;letter-spacing:1.6px">PROJECTS</div>
<!-- toggle -->
<div class="a" style="left:1608px;top:104px;width:34px;height:14px;border-radius:7px;background:#5a5a5a"></div>
<div class="a" style="left:1605px;top:101px;width:20px;height:20px;border-radius:10px;background:#c8c8c8;box-shadow:0 1px 2px rgba(0,0,0,.4)"></div>
<svg class="a" style="left:1607px;top:103px" width="16" height="16" viewBox="0 0 16 16"><path d="M9 2.5 A6 6 0 1 0 13.5 11 A5 5 0 0 1 9 2.5Z" fill="none" stroke="#777" stroke-width="1.1"/></svg>
<!-- bell -->
<svg class="a" style="left:1659px;top:101px" width="18" height="21" viewBox="0 0 18 21"><path d="M9 2 Q4 2.5 3.5 8 V13 L1 16 V17 H17 V16 L14.5 13 V8 Q14 2.5 9 2Z" fill="#fff"/><path d="M7 18.5 Q9 21 11 18.5Z" fill="#fff"/></svg>
<div class="a" style="left:1668px;top:90px;width:22px;height:22px;border-radius:11px;background:#38bbc9;color:#111;font-size:13px;text-align:center;line-height:22px;font-weight:bold">0</div>
<!-- admin -->
<div class="a" style="left:1707px;top:93px;width:140px;height:36px;border-radius:4px;background:#38bbc9;color:#111;font-size:15px;letter-spacing:1.3px;text-align:center;line-height:36px">admin</div>
<svg class="a" style="left:1874px;top:103px" width="22" height="16" viewBox="0 0 22 16"><path d="M1 2H20M1 8H20M1 14H20" stroke="#fff" stroke-width="2"/></svg>
<div class="a" style="left:0;top:146px;width:1916px;height:9px;background:linear-gradient(to bottom,rgba(0,0,0,.45),rgba(0,0,0,.15) 50%,rgba(0,0,0,0))"></div>
<!-- subheader -->
<div class="a" style="left:41px;top:176px;font-size:14px;font-weight:bold;color:#fff;letter-spacing:0.3px">Test Tara V1</div>
<svg class="a" style="left:470px;top:158px" width="1010" height="52" viewBox="470 158 1010 52">
 <path d="M475 160 H662 L686 184 L662 208 H475 L499 184 Z" fill="#c9e4e7"/>
 <path d="M670.5 160 H857.5 L881.5 184 L857.5 208 H670.5 L694.5 184 Z" fill="#c9e4e7"/>
 <path d="M866 160 H1053 L1077 184 L1053 208 H866 L890 184 Z" fill="#c9e4e7"/>
 <path d="M1061.5 160 H1248.5 L1272.5 184 L1248.5 208 H1061.5 L1085.5 184 Z" fill="#38bac9"/>
 <path d="M1257 160 H1444 L1468 184 L1444 208 H1257 L1281 184 Z" fill="#80dbe6"/>
</svg>
<div class="a" style="left:475px;top:176px;width:211px;text-align:center;font-size:14.5px;color:#111;letter-spacing:0.1px">Specifications</div>
<div class="a" style="left:670px;top:176px;width:211px;text-align:center;font-size:14.5px;color:#111;letter-spacing:0.2px">Definitions</div>
<div class="a" style="left:866px;top:176px;width:211px;text-align:center;font-size:14.5px;color:#111;letter-spacing:0.2px">Architecture</div>
<div class="a" style="left:1061px;top:176px;width:211px;text-align:center;font-size:14.5px;color:#111;font-weight:bold;letter-spacing:0.3px">Analysis</div>
<div class="a" style="left:1257px;top:176px;width:211px;text-align:center;font-size:14.5px;color:#111;letter-spacing:0.2px">Summary</div>
<div class="a" style="left:1765px;top:166px;width:112px;height:36px;border-radius:4px;background:#38bac9"></div>
<div class="a" style="left:1781px;top:176px;font-size:14.5px;color:#111;letter-spacing:1.2px">Next</div>
<svg class="a" style="left:1843px;top:177px" width="12" height="14" viewBox="0 0 12 14"><path d="M3.5 1.5L9 7L3.5 12.5" fill="none" stroke="#111" stroke-width="2.2"/></svg>
<div class="a" style="left:0;top:222px;width:420px;height:6px;background:linear-gradient(to bottom,rgba(0,0,0,.2),rgba(0,0,0,0));z-index:5"></div>
<div class="a" style="left:420px;top:222px;width:1496px;height:8px;background:linear-gradient(to bottom,rgba(0,0,0,.55),rgba(0,0,0,.25) 40%,rgba(0,0,0,0));z-index:5"></div>

<!-- rail -->
<div class="a circ" style="top:236px">TSC</div>
<div class="a circ" style="top:295px;background:#38bbc9;color:#111">AT</div>
<div class="a circ" style="top:354px">AS</div>
<div class="a circ" style="top:413px">AR</div>
<svg class="a" style="left:19px;top:1105px" width="18" height="18" viewBox="0 0 18 18"><path d="M3 2.5L9 9L3 15.5M9 2.5L15 9L9 15.5" fill="none" stroke="#eee" stroke-width="1.3"/></svg>
<!-- sidebar -->
<div class="a" style="left:157px;top:254px;font-size:16.5px;color:#fff;letter-spacing:0px">Attack Trees</div>
<div class="a" style="left:314px;top:235px;width:44px;height:44px;border-radius:22px;border:1.5px solid #38bbc9"></div>
<svg class="a" style="left:324px;top:245px" width="24" height="24" viewBox="0 0 24 24"><path d="M3.9 8 A7 7 0 1 1 5 13.5" fill="none" stroke="#fff" stroke-width="1.5"/><path d="M2 11.5H6L8 6.8L10.5 13.3L12.5 8.5L15 12" fill="none" stroke="#fff" stroke-width="1.5" stroke-linejoin="round"/><path d="M15.8 14.8L21.8 20.5" stroke="#fff" stroke-width="1.6"/></svg>
<div class="a" style="left:369px;top:235px;width:44px;height:44px;border-radius:22px;border:1.5px solid #38bbc9"></div>
<svg class="a" style="left:379px;top:245px" width="24" height="24" viewBox="0 0 24 24"><path d="M5.3 12.9 A6.6 6.6 0 1 0 12 6.2" fill="none" stroke="#fff" stroke-width="2.7"/><path d="M12.6 0.9V10.7L6.8 5.8Z" fill="#fff"/></svg>
<!-- filter -->
<div class="a fld" style="left:62px;top:294px;width:349px;height:56px"></div>
<div class="a" style="left:73px;top:287px;padding:0 5px;background:#5b5b5b;font-size:12.5px;color:#d8d8d8;letter-spacing:0.1px;line-height:15px">Filter by</div>
<div class="a" style="left:78px;top:312px;font-size:16.5px;color:#fff;letter-spacing:0.25px">Asset</div>
<svg class="a" style="left:385px;top:318px" width="12" height="8" viewBox="0 0 12 8"><path d="M1 1.5H11L6 6.5Z" fill="#ddd"/></svg>
<div class="a fld" style="left:62px;top:357px;width:349px;height:56px"></div>
<div class="a" style="left:78px;top:376px;font-size:16.5px;color:#c8c8c8;letter-spacing:0.2px">Search</div>
<svg class="a" style="left:376px;top:374px" width="22" height="22" viewBox="0 0 22 22"><circle cx="9" cy="9" r="5.8" fill="none" stroke="#fff" stroke-width="2.2"/><path d="M13.2 13.2L19 19" stroke="#fff" stroke-width="2.6"/></svg>
<div class="a item" style="top:420px;background:#6b6b6b"><div>Abuse of Control Unit Interfaces on Data</div><div>communication - lamp request: Execution...</div></div>
<div class="a item" style="top:476px;background:#6b6b6b"><div>Abuse of Control Unit Interfaces on Data</div><div>communication - oncoming car information:...</div></div>
<div class="a item" style="top:532px;background:#6b6b6b"><div>Abuse of Control Unit Interfaces on Firmware of</div><div>body control ECU: Execution (Body Control...</div></div>
<div class="a item" style="top:588px;background:#6b6b6b"><div>Physical Manipulation of Vehicle Systems to</div><div>Enable an Attack on Data communication - la...</div></div>
<div class="a item" style="top:644px;background:#6b6b6b"><div>Physical Manipulation of Vehicle Systems to</div><div>Enable an Attack on Data communication -...</div></div>
<div class="a item" style="top:700px;background:#6b6b6b"><div>Privilege Escalation in Vehicle Control Units on</div><div>Data communication - lamp request: Privilege...</div></div>
<div class="a item" style="top:756px;background:#6b6b6b"><div>Privilege Escalation in Vehicle Control Units on</div><div>Data communication - oncoming car informatio...</div></div>
<div class="a item" style="top:812px;background:#4a4a4a"><div>Privilege Escalation in Vehicle Control Units on</div><div>Firmware of body control ECU: Privilege...</div></div>
<div id="bottomstrip" class="a"></div>
</body></html>
